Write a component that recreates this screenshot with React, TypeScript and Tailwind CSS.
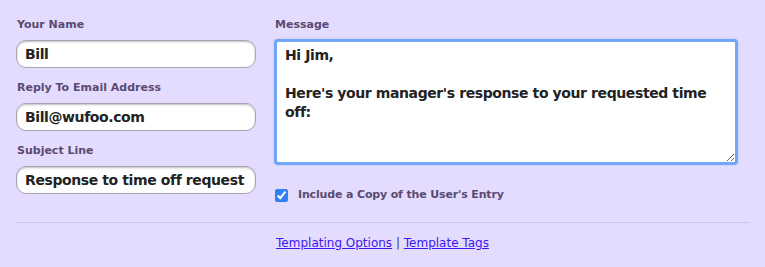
import React from "react";

const font = { fontFamily: '"DejaVu Sans", Verdana, sans-serif' };

function Field({ label, value }: { label: string; value: string }) {
    return (
        <div className="flex flex-col">
            <label className="text-[11px] leading-4 font-bold text-[#5a4a72] pl-px">{label}</label>
            <input
                readOnly
                value={value}
                className="mt-[7px] h-[28px] w-[240px] rounded-[10px] border border-[#a9a3b3] bg-white px-[8px] text-[14px] font-bold tracking-[-0.4px] text-[#222] shadow-[inset_0_1px_2px_rgba(0,0,0,0.25)] outline-none"
                style={font}
            />
        </div>
    );
}

export default function App() {
    return (
        <div className="w-[765px] h-[267px] bg-[#e4dcfe] px-4 pt-[17px]" style={font}>
            <div className="flex gap-[18px]">
                <div className="flex flex-col gap-[12px]">
                    <Field label="Your Name" value="Bill" />
                    <Field label="Reply To Email Address" value="Bill@wufoo.com" />
                    <Field label="Subject Line" value="Response to time off request" />
                </div>
                <div className="flex flex-col">
                    <label className="text-[11px] leading-4 font-bold text-[#5a4a72] pl-px">Message</label>
                    <textarea
                        readOnly
                        className="mt-[6px] h-[126px] w-[464px] rounded-[4px] border-[3px] border-[#73a6f5] bg-white px-[8px] py-[4px] text-[14px] leading-[19px] font-bold tracking-[-0.4px] text-[#222] outline-none shadow-[0_0_2px_#9cc0fa]"
                        style={font}
                        value={"Hi Jim,\n\nHere's your manager's response to your requested time off:"}
                    />
                    <label className="mt-[22px] flex items-center gap-[10px] pl-px">
                        <input type="checkbox" defaultChecked className="h-[13px] w-[13px] accent-[#2f7ff6]" />
                        <span className="text-[11px] font-bold tracking-[-0.15px] text-[#5a4a72]">Include a Copy of the User's Entry</span>
                    </label>
                </div>
            </div>
            <div className="mt-[18px] border-t border-dotted border-[#b9b0cf]" />
            <div className="mt-[11px] text-center text-[12px] text-[#444]">
                <a href="#" className="text-[#3a17f0] underline">Templating Options</a>
                {" | "}
                <a href="#" className="text-[#3a17f0] underline">Template Tags</a>
            </div>
        </div>
    );
}
